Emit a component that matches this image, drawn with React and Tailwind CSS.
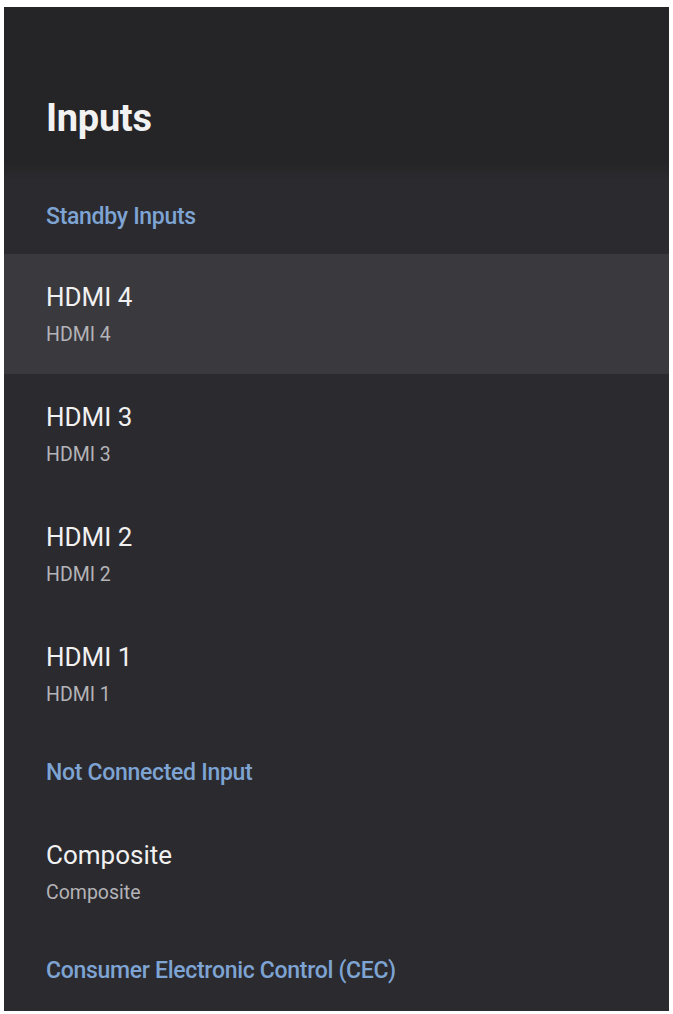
export default function App() {
  const standby = ["HDMI 4", "HDMI 3", "HDMI 2", "HDMI 1"];

  const Section = ({ label, h }) => (
    <div className={`flex items-center px-[42px] ${h}`}>
      <span className="text-[23px] font-medium leading-[28px] tracking-[-0.3px] text-[#7ea4d3]">{label}</span>
    </div>
  );

  const Row = ({ name, active }) => (
    <div
      className={`flex h-[120px] flex-col justify-start px-[42px] pt-[27px] ${
        active ? "bg-[#3a393e]" : ""
      }`}
    >
      <span className="text-[26px] leading-[32px] text-[#f1f1f1]">{name}</span>
      <span className="mt-[10px] text-[19.5px] leading-[24px] text-[#b4b3b7]">{name}</span>
    </div>
  );

  return (
    <div
      className="min-h-screen bg-white pt-[7px] pr-[4px] pb-[3px] pl-[4px]"
      style={{ fontFamily: "Roboto, 'Noto Sans', sans-serif" }}
    >
      <div className="flex h-[1004px] flex-col overflow-hidden bg-[#2b2a2f]">
        <div className="flex h-[173px] items-start bg-gradient-to-b from-[#252527] from-90% to-[#2b2a2f] px-[42px] pt-[90px]">
          <h1 className="text-[38px] font-bold leading-[42px] tracking-[-0.3px] text-[#f2f2f2]">Inputs</h1>
        </div>
        <Section label="Standby Inputs" h="h-[74px]" />
        {standby.map((n, i) => (
          <Row key={n} name={n} active={i === 0} />
        ))}
        <Section label="Not Connected Input" h="h-[78px]" />
        <Row name="Composite" />
        <Section label="Consumer Electronic Control (CEC)" h="h-[78px]" />
      </div>
    </div>
  );
}
